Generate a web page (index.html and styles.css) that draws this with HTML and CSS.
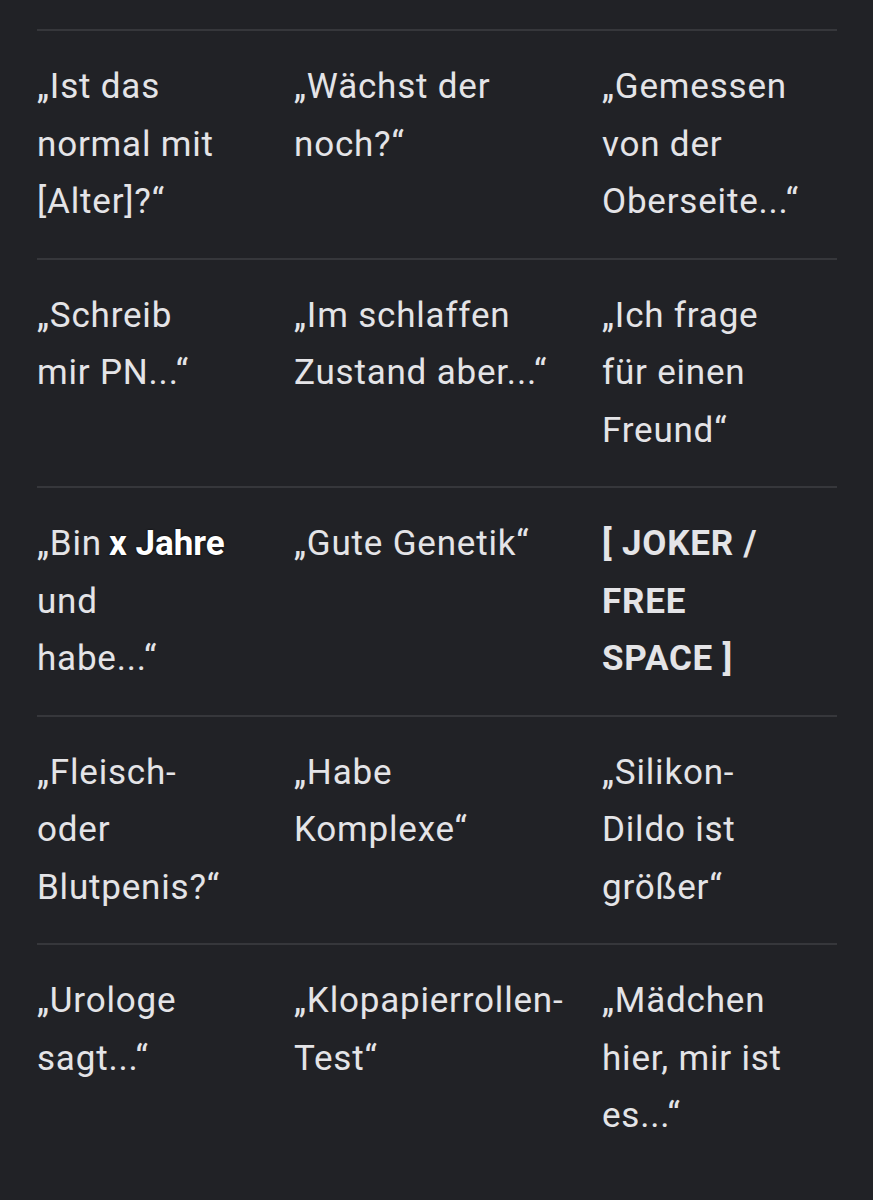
FILE: index.html
```html
<!DOCTYPE html>
<html lang="de">
<head>
  <meta charset="UTF-8" />
  <meta name="viewport" content="width=device-width, initial-scale=1" />
  <title>Bingo</title>
  <link rel="stylesheet" href="styles.css">
</head>
<body>
  <div class="board">
    <div class="row">
      <div class="cell">„Ist das normal mit [Alter]?“</div>
      <div class="cell">„Wächst der noch?“</div>
      <div class="cell">„Gemessen von der Oberseite...“</div>
    </div>
    <div class="row">
      <div class="cell">„Schreib mir PN...“</div>
      <div class="cell">„Im schlaffen Zustand aber...“</div>
      <div class="cell">„Ich frage für einen Freund“</div>
    </div>
    <div class="row">
      <div class="cell">„Bin<span class="mark">x Jahre</span> und<br>habe...“</div>
      <div class="cell">„Gute Genetik“</div>
      <div class="cell joker">[ JOKER / FREE SPACE&nbsp;]</div>
    </div>
    <div class="row">
      <div class="cell">„Fleisch- oder Blutpenis?“</div>
      <div class="cell">„Habe Komplexe“</div>
      <div class="cell">„Silikon-Dildo ist größer“</div>
    </div>
    <div class="row">
      <div class="cell">„Urologe sagt...“</div>
      <div class="cell">„Klopapierrollen-Test“</div>
      <div class="cell">„Mädchen hier, mir ist es...“</div>
    </div>
  </div>
</body>
</html>
```

FILE: styles.css
```css
body {
  margin: 0;
  background: #212226;
  color: #e4e4e7;
  font-family: Roboto, "Noto Sans", sans-serif;
}
.board {
  width: 800px;
  margin: 29px 0 0 37px;
}
.row {
  display: grid;
  grid-template-columns: 257px 308px 235px;
  border-top: 2px solid #36373b;
  padding: 27px 0;
  font-size: 35px;
  letter-spacing: 0.8px;
  line-height: 57.5px;
}
.cell {
  padding-right: 61px;
}
.cell:nth-child(2) {
  padding-right: 30px;
}
.cell:nth-child(3) {
  padding-right: 36px;
}
.mark {
  font-weight: 700;
  color: #fff;
  margin-left: 7px;
  letter-spacing: 0;
  text-shadow: 0 0 2px #000;
}
.joker {
  font-weight: 700;
}
```
